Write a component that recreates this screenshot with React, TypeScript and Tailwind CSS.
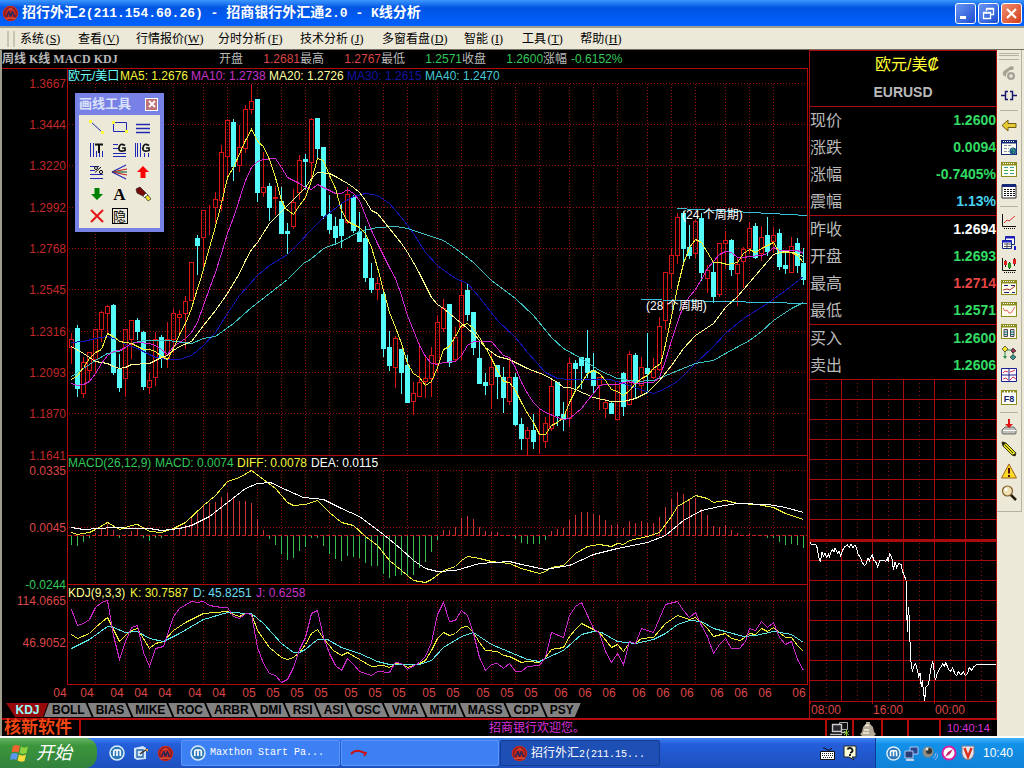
import React from "react";

type Candle = [kind: "u" | "d", high: number, top: number, bottom: number, low: number];

const candles: Candle[] = [
  ["u", 333, 339, 347, 363], ["d", 325, 328, 388, 396], ["u", 357, 362, 393, 397], ["u", 352, 352, 370, 380],
  ["u", 329, 329, 359, 372], ["u", 311, 312, 329, 341], ["u", 305, 306, 313, 333], ["d", 304, 305, 372, 374],
  ["d", 354, 369, 387, 391], ["u", 329, 329, 378, 396], ["u", 320, 320, 339, 358], ["d", 318, 320, 331, 339],
  ["d", 331, 332, 386, 389], ["u", 373, 380, 387, 393], ["u", 332, 339, 377, 385], ["d", 335, 337, 357, 367],
  ["u", 322, 339, 358, 367], ["u", 308, 313, 339, 352], ["u", 310, 314, 317, 335], ["u", 296, 301, 313, 348],
  ["u", 262, 262, 300, 300], ["d", 235, 238, 245, 274], ["u", 210, 210, 237, 267], ["u", 205, 212, 212, 234],
  ["u", 192, 199, 207, 222], ["u", 145, 152, 200, 210], ["u", 119, 120, 156, 175], ["d", 119, 122, 166, 180],
  ["u", 125, 147, 165, 171], ["u", 105, 109, 148, 152], ["u", 84, 101, 109, 113], ["d", 99, 99, 192, 201],
  ["u", 152, 187, 192, 196], ["d", 183, 186, 207, 220], ["u", 186, 197, 198, 214], ["d", 187, 201, 233, 233],
  ["d", 223, 231, 233, 253], ["u", 189, 202, 226, 228], ["u", 155, 160, 192, 199], ["d", 154, 159, 161, 189],
  ["u", 118, 119, 162, 179], ["d", 118, 118, 148, 158], ["d", 147, 147, 215, 218], ["d", 195, 214, 229, 233],
  ["d", 217, 226, 237, 244], ["d", 204, 219, 235, 247], ["u", 187, 194, 222, 223], ["d", 195, 197, 230, 232],
  ["d", 212, 232, 241, 241], ["d", 226, 238, 277, 281], ["d", 263, 278, 289, 292], ["u", 277, 283, 289, 299],
  ["d", 292, 294, 348, 356], ["d", 331, 347, 365, 370], ["u", 336, 338, 367, 387], ["d", 349, 349, 372, 393],
  ["d", 355, 365, 402, 402], ["u", 382, 393, 401, 414], ["u", 343, 382, 396, 396], ["u", 355, 378, 381, 397],
  ["u", 347, 355, 378, 396], ["u", 315, 322, 363, 372], ["u", 299, 308, 328, 331], ["d", 304, 304, 362, 366],
  ["u", 327, 337, 359, 360], ["u", 280, 295, 327, 359], ["d", 283, 290, 314, 320], ["d", 312, 312, 347, 354],
  ["d", 342, 358, 383, 383], ["d", 373, 382, 385, 394], ["u", 352, 367, 384, 408], ["d", 365, 365, 376, 398],
  ["d", 367, 377, 397, 412], ["u", 357, 377, 401, 404], ["d", 373, 377, 424, 425], ["d", 418, 424, 438, 449],
  ["u", 427, 430, 438, 455], ["d", 414, 430, 441, 448], ["u", 408, 442, 442, 453], ["u", 417, 423, 441, 447],
  ["u", 378, 386, 428, 430], ["d", 382, 382, 415, 425], ["d", 402, 414, 419, 430], ["u", 358, 363, 418, 426],
  ["d", 360, 363, 368, 390], ["d", 357, 357, 365, 388], ["d", 330, 358, 372, 377], ["d", 353, 370, 385, 393],
  ["u", 377, 377, 385, 409], ["u", 399, 402, 408, 417], ["d", 401, 403, 413, 413], ["u", 381, 381, 419, 419],
  ["d", 372, 373, 406, 415], ["u", 351, 354, 404, 404], ["d", 353, 355, 383, 398], ["u", 357, 367, 385, 393],
  ["d", 333, 368, 373, 392], ["u", 358, 369, 377, 378], ["u", 317, 326, 369, 370], ["u", 272, 272, 320, 329],
  ["u", 248, 255, 273, 288], ["u", 213, 217, 255, 263], ["d", 211, 213, 248, 264], ["d", 225, 247, 255, 258],
  ["u", 220, 221, 253, 257], ["d", 213, 218, 272, 280], ["u", 265, 270, 278, 292], ["d", 262, 272, 296, 302],
  ["u", 243, 243, 294, 296], ["u", 231, 240, 243, 268], ["d", 239, 240, 269, 275], ["u", 257, 264, 273, 305],
  ["u", 247, 249, 261, 287], ["u", 222, 228, 248, 253], ["d", 223, 226, 257, 258], ["u", 226, 237, 253, 260],
  ["d", 217, 235, 251, 255], ["u", 227, 235, 241, 252], ["d", 229, 233, 266, 269], ["d", 253, 265, 268, 273],
  ["u", 237, 246, 272, 272], ["d", 238, 243, 265, 272], ["d", 248, 263, 279, 284],
];

const macdBars = [
  -9, -10, -6, -2, 2, 6, 11, 5, -2, 0, 4, 6, -2, -5, -2, -2, 0, 5, 7, 10, 17, 22, 29, 32, 33, 38, 42, 37, 34, 34, 32,
  16, 5, -3, -9, -18, -24, -22, -15, -11, -2, -2, -10, -18, -23, -25, -20, -21, -22, -27, -30, -30, -38, -42, -40,
  -39, -40, -39, -32, -26, -16, -4, 5, 5, 8, 17, 19, 16, 8, 4, 3, 3, 0, 0, -3, -7, -8, -8, -8, -4, 4, 6, 7, 15, 20,
  23, 23, 21, 20, 15, 10, 11, 7, 14, 12, 14, 12, 12, 18, 28, 36, 43, 41, 36, 37, 26, 20, 9, 8, 10, 5, 2, 0, 2, 0, 0,
  -2, -2, -6, -9, -8, -9, -12,
];

const priceLines: { color: string; points: string }[] = [
  {
    color: "#1414b4",
    points:
      "71,342 83,341 95,338 107,336 119,340 125,344 137,348 155,357 167,359 179,359 191,355 203,345 215,332 227,313 239,295 257,275 269,265 287,254 299,242 310,230 323,217 341,203 353,196 365,193 377,195 389,203 401,217 413,233 425,252 437,265 455,278 467,283 479,297 497,320 515,337 527,352 545,372 557,378 570,379 610,379 623,383 640,389 653,393 663,389 677,381 695,363 713,346 725,333 743,318 767,303 785,290 803,276",
  },
  {
    color: "#3cc0c0",
    points:
      "71,376 83,368 95,360 107,353 119,351 131,343 143,340 167,340 191,343 203,338 215,336 233,323 251,307 269,293 287,279 303,263 310,259 323,248 341,241 359,231 377,227 395,226 407,228 425,234 443,240 455,248 473,262 491,280 515,298 533,315 551,337 563,348 581,358 599,370 617,378 635,381 653,380 663,376 695,363 713,360 725,353 749,340 761,331 773,320 791,308 803,302",
  },
  {
    color: "#ffff90",
    points:
      "71,346 83,353 95,361 107,363 113,366 119,368 125,367 131,364 149,363 161,357 167,355 173,350 179,346 191,341 197,333 203,325 215,310 227,293 239,273 245,260 251,249 257,242 269,223 281,211 293,199 305,187 311,178 317,172 329,173 335,176 347,183 353,187 359,192 365,200 371,210 377,213 389,228 401,243 407,252 413,262 419,273 425,285 431,297 437,304 443,308 455,318 461,323 473,333 485,347 497,356 509,359 527,368 545,375 557,382 563,387 569,387 575,389 593,397 611,401 623,401 635,398 647,392 659,380 671,365 683,348 695,335 713,323 725,307 737,296 755,275 767,261 773,254 783,251 793,252 803,256",
  },
  {
    color: "#d228d2",
    points:
      "71,383 77,385 83,384 89,381 95,373 101,363 107,355 113,351 119,350 125,347 131,343 137,342 149,343 155,345 161,349 167,354 173,346 179,342 185,338 191,332 197,322 203,305 209,288 215,272 221,253 227,233 233,217 245,180 251,167 257,161 263,159 275,158 281,167 287,177 293,180 299,183 305,187 311,189 317,184 323,187 335,193 341,193 347,189 353,193 359,200 365,215 371,230 377,243 383,255 389,267 395,278 401,295 407,315 413,330 419,345 425,356 431,363 437,364 443,362 455,361 461,355 467,345 473,341 491,341 497,348 503,355 509,357 515,367 521,382 527,393 533,402 539,408 545,412 557,417 563,419 569,418 575,413 581,408 587,400 593,393 599,385 605,384 617,384 627,381 635,383 653,382 659,377 665,360 671,340 677,322 683,305 689,296 695,289 701,279 707,268 713,261 719,254 725,251 731,252 737,257 743,257 749,256 761,255 767,253 773,247 779,250 797,250 803,253",
  },
  {
    color: "#f0f03c",
    points:
      "71,379 77,375 83,367 89,358 95,352 101,349 107,333 113,336 119,341 125,342 131,343 137,346 143,349 149,349 155,351 161,356 167,359 173,348 179,334 185,323 191,308 197,288 200,279 213,233 221,203 227,177 233,167 245,140 251,129 258,142 263,146 269,159 275,177 281,200 285,208 293,214 299,205 305,197 311,180 317,158 323,160 329,175 335,188 341,210 347,221 359,227 365,233 371,247 377,267 383,290 389,312 395,327 401,343 407,363 413,373 419,377 425,385 431,381 437,367 443,349 449,346 455,336 461,325 467,323 473,328 479,337 485,347 491,358 497,370 503,381 509,382 515,390 521,402 527,413 533,422 539,434 545,434 551,425 557,422 563,417 569,402 575,390 581,383 587,373 593,370 599,373 605,380 611,389 617,391 623,395 629,390 635,383 641,378 647,375 653,368 660,363 663,353 668,330 673,307 677,287 683,263 689,247 695,239 701,242 707,252 713,262 719,262 727,264 737,262 743,253 749,249 755,252 761,248 767,245 773,242 779,252 791,252 797,255 803,262",
  },
  { color: "#3cc0d8", points: "677,208 807,215" },
  { color: "#3cc0d8", points: "641,299 807,303" },
];

const indicatorLines: { color: string; points: string }[] = [
  {
    color: "#f0f03c",
    points:
      "71,532 77,534 89,532 95,529 107,522 119,529 131,525 137,524 149,531 161,532 173,528 185,522 203,505 215,495 227,481 239,477 251,470 263,479 275,488 287,502 293,505 305,504 317,500 329,512 341,522 353,525 365,536 377,545 389,560 401,570 413,580 425,582 431,579 443,570 455,566 461,560 467,556 479,558 491,561 509,563 521,568 539,573 545,571 551,567 563,565 575,553 587,546 599,544 611,546 617,543 623,544 629,540 647,536 659,532 671,516 677,506 689,499 695,495 707,498 713,502 725,500 737,503 757,504 773,507 785,513 803,519",
  },
  {
    color: "#ffffff",
    points:
      "71,527 83,529 113,527 133,528 149,528 161,530 179,528 191,525 209,516 227,502 245,488 257,483 270,482 287,490 303,497 323,499 341,508 359,516 383,534 400,548 413,560 425,568 437,571 455,570 479,563 509,561 521,564 545,569 569,565 593,554 617,548 647,542 665,535 683,520 701,510 719,506 737,503 767,504 785,507 803,512",
  },
  {
    color: "#f0f03c",
    points:
      "71,634 77,638 89,633 95,627 107,617 119,641 125,635 131,630 137,628 149,648 155,643 163,641 173,630 185,622 203,613 227,611 233,614 239,616 245,613 251,613 257,630 269,647 281,657 287,659 293,657 299,652 305,644 311,633 317,629 323,638 333,650 341,655 347,652 359,659 371,666 383,665 389,667 395,663 401,663 407,667 419,663 425,660 431,650 437,638 443,632 449,635 455,633 461,627 467,626 473,632 479,642 485,650 497,651 503,655 509,656 521,662 527,661 539,662 545,657 551,649 563,647 569,636 575,629 581,623 587,626 599,632 611,647 617,644 623,651 629,642 635,643 641,638 653,637 665,623 677,615 689,619 695,617 701,622 707,628 713,636 725,633 731,638 740,640 749,633 755,634 761,628 767,631 773,627 779,632 785,637 791,637 797,645 803,651",
  },
  {
    color: "#5ae6e6",
    points:
      "71,648 89,639 107,626 113,627 125,632 137,631 149,638 163,641 179,633 203,619 227,612 251,613 263,623 281,643 293,652 299,652 305,649 317,639 327,639 341,647 359,653 377,661 389,664 409,664 419,664 431,660 443,647 461,636 473,632 491,644 515,654 527,659 539,661 545,658 563,650 581,634 593,631 601,632 617,641 635,643 653,639 665,633 677,624 689,620 701,621 713,628 725,631 743,636 755,635 773,631 791,634 803,642",
  },
  {
    color: "#c828c8",
    points:
      "71,609 77,625 83,623 89,619 95,607 101,602 107,600 113,635 119,659 125,641 131,627 137,625 143,652 149,666 155,648 163,646 173,616 179,608 191,601 197,602 203,601 209,605 221,607 227,607 233,616 239,618 245,613 251,614 257,647 263,663 269,673 275,675 281,682 287,679 293,667 299,649 305,637 311,613 317,610 323,637 329,653 335,665 341,670 347,658 353,664 359,671 371,675 377,671 389,672 395,662 401,663 407,669 419,662 425,656 431,642 437,614 443,602 449,621 455,620 461,610 467,615 473,633 479,657 485,670 491,664 497,663 503,668 509,663 515,671 521,671 527,666 539,665 545,657 551,632 563,637 569,615 575,606 581,602 587,615 593,628 599,633 605,651 611,662 617,653 623,664 629,641 635,643 641,628 653,632 665,604 677,601 683,610 689,617 695,612 701,625 707,636 713,653 719,644 725,638 731,648 739,648 745,641 749,628 755,630 761,621 767,627 773,622 779,637 785,644 791,641 797,659 803,670",
  },
];

const gridColumns = [
  95, 125, 149, 173, 203, 227, 257, 281, 305, 329, 359, 383, 407, 437, 461, 491, 515, 539, 569, 593, 617, 647, 671,
  695, 725, 749, 773,
];
const gridRows = [83, 124, 165, 207, 248, 289, 331, 372, 413, 470, 527, 600, 642];
const priceLabels: [string, number][] = [
  ["1.3667", 83], ["1.3444", 124], ["1.3220", 165], ["1.2992", 207], ["1.2768", 248],
  ["1.2545", 289], ["1.2316", 331], ["1.2093", 372], ["1.1870", 413], ["1.1641", 455],
];
const monthLabels = [60, ...gridColumns.map((x) => x - 8), 799];

const SANS = '"Liberation Sans","Noto Sans CJK SC",sans-serif';

function PriceChart() {
  return (
    <svg viewBox="2 68 807 634" className="block h-auto w-full" fontFamily={SANS} fontSize="12">
      <g shapeRendering="crispEdges" fill="none">
        <g stroke="#960e0e" strokeDasharray="1 2">
          {gridColumns.map((x) => (
            <React.Fragment key={x}>
              <path d={`M${x + 0.5} 84V455`} />
              <path d={`M${x + 0.5} 471V584`} />
              <path d={`M${x + 0.5} 601V684`} />
            </React.Fragment>
          ))}
          {gridRows.map((y) => (
            <path key={y} d={`M69 ${y + 0.5}H807`} />
          ))}
        </g>
        <path d="M2 68.5H807.5V684.5H67.5V68.5M67 455.5H807M67 584.5H807" stroke="#b40a0a" />
        <path d="M68 535.5H807" stroke="#c81e1e" strokeDasharray="4 2" />
        {macdBars.map((v, i) =>
          v === 0 ? null : (
            <rect
              key={i}
              x={71 + i * 6}
              y={v > 0 ? 535 - v : 536}
              width="1"
              height={Math.abs(v)}
              fill={v > 0 ? "#d23232" : "#32be50"}
            />
          ),
        )}
        {candles.map(([kind, high, top, bottom, low], i) => {
          const x = 71 + i * 6;
          return kind === "d" ? (
            <g key={i} fill="#54fcfc">
              <rect x={x} y={high} width="1" height={low - high + 1} />
              <rect x={x - 2} y={top} width="5" height={bottom - top + 1} />
            </g>
          ) : (
            <g key={i}>
              <path
                d={`M${x} ${high}h1V${top}h-1zM${x} ${bottom}h1V${low + 1}h-1z`}
                fill="#d81414"
              />
              <rect x={x - 1.5} y={top + 0.5} width="4" height={bottom - top} stroke="#d81414" />
            </g>
          );
        })}
        {[...priceLines, ...indicatorLines].map((line, i) => (
          <polyline key={i} points={line.points} stroke={line.color} transform="translate(0.5 0.5)" />
        ))}
      </g>

      <g fill="#c02828" textAnchor="end">
        {priceLabels.map(([label, y]) => (
          <text key={label} x="66" y={y + 5}>{label}</text>
        ))}
        <g fill="#dc4646">
          <text x="66" y="475">0.0335</text>
          <text x="66" y="532">0.0045</text>
          <text x="66" y="589" fill="#32c85a">-0.0244</text>
          <text x="66" y="605">114.0665</text>
          <text x="66" y="647">46.9052</text>
        </g>
      </g>
      <g fill="#dc4646" textAnchor="middle">
        {monthLabels.map((x, i) => (
          <text key={x} x={x} y="697">{i < 7 ? "04" : i < 19 ? "05" : "06"}</text>
        ))}
      </g>
      <text x="68" y="80" fill="#6effff">欧元/美口</text>
      <text x="120" y="80" fill="#f5f53c">MA5: 1.2676</text>
      <text x="191" y="80" fill="#c832c8">MA10: 1.2738</text>
      <text x="269" y="80" fill="#ffffa0">MA20: 1.2726</text>
      <text x="347" y="80" fill="#1414a0">MA30: 1.2615</text>
      <text x="425" y="80" fill="#46c8d2">MA40: 1.2470</text>

      <text x="68" y="467" fill="#32c85a">MACD(26,12,9)</text>
      <text x="155" y="467" fill="#32c85a">MACD: 0.0074</text>
      <text x="237" y="467" fill="#f5f53c">DIFF: 0.0078</text>
      <text x="311" y="467" fill="#ffffff">DEA: 0.0115</text>

      <text x="68" y="597" fill="#ffff90">KDJ(9,3,3)</text>
      <text x="130" y="597" fill="#f5f53c">K: 30.7587</text>
      <text x="193" y="597" fill="#6edcf0">D: 45.8251</text>
      <text x="256" y="597" fill="#c832c8">J: 0.6258</text>

      <text x="682" y="219" fill="#ffffff">(24 个周期)</text>
      <text x="646" y="310" fill="#ffffff">(28 个周期)</text>
    </svg>
  );
}

/* Intraday ticks, in thirds of a pixel from the chart origin. */
const ticks: [number, number][] = [
  [30, 487], [34, 493], [48, 495], [52, 505], [56, 530], [61, 547], [66, 515], [70, 530], [75, 520], [80, 532],
  [85, 522], [88, 530], [93, 517], [98, 508], [102, 515], [105, 505], [109, 512], [113, 520], [117, 512],
  [122, 528], [128, 510], [134, 500], [142, 495], [148, 503], [153, 492], [159, 503], [165, 495], [170, 505],
  [175, 525], [180, 530], [186, 545], [192, 556], [198, 553], [204, 535], [208, 543], [213, 530], [217, 525],
  [221, 540], [227, 545], [233, 560], [240, 540], [250, 540], [257, 545], [262, 535], [265, 545], [269, 518],
  [277, 540], [280, 570], [285, 545], [290, 562], [296, 550], [303, 553], [308, 575], [312, 585], [318, 600],
  [320, 680], [322, 757], [325, 682], [327, 705], [330, 785], [333, 845], [337, 875], [341, 860], [347, 850],
  [352, 870], [356, 890], [360, 880], [364, 920], [367, 900], [370, 930], [374, 962], [378, 920], [385, 915],
  [392, 870], [398, 842], [402, 870], [406, 900], [412, 880], [420, 865], [428, 852], [433, 858], [438, 848],
  [445, 868], [452, 873], [458, 863], [464, 880], [470, 887], [475, 875], [483, 885], [490, 875], [496, 887],
  [503, 880], [508, 862], [514, 872], [522, 860], [530, 853], [588, 853],
];

function IntradayChart() {
  const rows = [399, 419, 439, 459, 479, 499, 519, 560, 580, 600, 620, 640, 660, 680, 701];
  return (
    <svg viewBox="809 379 188 339" className="block h-auto w-full" fontFamily={SANS} fontSize="12">
      <g shapeRendering="crispEdges" fill="none" stroke="#aa0a0a">
        {rows.map((y) => (
          <path key={y} d={`M809 ${y + 0.5}H997`} />
        ))}
        {[841, 872, 903, 934, 965, 996].map((x) => (
          <path key={x} d={`M${x + 0.5} 379V701`} />
        ))}
        {[826, 857, 888, 919, 950, 981].map((x) => (
          <path key={x} d={`M${x + 0.5} 379V701`} strokeDasharray="1 3" stroke="#961414" />
        ))}
        <path d="M809 379.5H997" />
        <path d="M809 540.5H997" strokeWidth="3" />
        <path d="M810.5 701V704M872.5 701V704M934.5 701V704" />
        <polyline
          points={ticks.map(([x, y]) => `${800 + x / 3},${380 + y / 3}`).join(" ")}
          stroke="#ffffff"
        />
      </g>
      <g fill="#dc4646">
        <text x="811" y="714">08:00</text>
        <text x="873" y="714">16:00</text>
        <text x="935" y="714">00:00</text>
      </g>
    </svg>
  );
}

function BankLogo({ className }: { className: string }) {
  return (
    <svg viewBox="0 0 18 18" className={className}>
      <circle cx="9" cy="9" r="8.2" fill="#c8281e" />
      <circle cx="9" cy="9" r="6.2" fill="none" stroke="#5a1420" strokeWidth="1" />
      <path d="M4 12.5 6.8 6h.8L9 9.5 10.6 6h.8l2.8 6.5h-2L11 9l-1.2 3.5H8.2L7 9l-1.2 3.5z" fill="#28285a" />
      <path d="M3.5 14h11M6.8 5.5 9 3l2.4 2.5" stroke="#f06440" strokeWidth="1" fill="none" />
    </svg>
  );
}

function MaxthonLogo({ className }: { className: string }) {
  return (
    <svg viewBox="0 0 16 16" className={className}>
      <circle cx="8" cy="8" r="7" fill="#2c78b8" stroke="#dceefa" strokeWidth="1.5" />
      <path d="M4.8 11V6.5Q4.8 5 6.4 5H9.8Q11.3 5 11.3 6.5V11M8 5.5V11" stroke="#fff" strokeWidth="1.7" fill="none" />
    </svg>
  );
}

const quoteGroups: [string, string, string][][] = [
  [
    ["现价", "1.2600", "text-[#32dc64]"],
    ["涨跌", "0.0094", "text-[#32dc64]"],
    ["涨幅", "-0.7405%", "text-[#32dc64]"],
    ["震幅", "1.13%", "text-[#46d2f0]"],
  ],
  [
    ["昨收", "1.2694", "text-white"],
    ["开盘", "1.2693", "text-[#32dc64]"],
    ["最高", "1.2714", "text-[#e64646]"],
    ["最低", "1.2571", "text-[#32dc64]"],
  ],
  [
    ["买入", "1.2600", "text-[#32dc64]"],
    ["卖出", "1.2606", "text-[#32dc64]"],
  ],
];

function QuotePanel() {
  return (
    <aside className="flex w-[188px] shrink-0 flex-col border-x border-t border-[#aa0a0a]">
      <div className="flex h-[55px] flex-col items-center pt-[3px]">
        <h2 className="pl-2 text-base leading-[22px] text-[#ffff32]">欧元/美₡</h2>
        <p className="pt-1 text-sm leading-6 font-bold text-[#b9b9b9]">EURUSD</p>
      </div>
      <table className="w-full border-collapse">
        {quoteGroups.map((group, i) => (
          <tbody key={i} className="border-t border-[#aa0a0a]">
            {group.map(([label, value, tone]) => (
              <tr key={label} className="h-[27px]">
                <th scope="row" className="p-0 text-left text-base leading-[27px] font-normal text-[#b9b9b9]">{label}</th>
                <td className={`p-0 text-right text-sm leading-[27px] font-bold ${tone}`}>{value}</td>
              </tr>
            ))}
          </tbody>
        ))}
      </table>
      <div className="-mx-px">
        <IntradayChart />
      </div>
    </aside>
  );
}

const drawTools: [string, React.ReactNode][] = [
  ["线段", <><path d="M3 3 14 13" stroke="#1e28b4" /><path d="M1 1h3v3H1zM13 12h3v3h-3z" fill="#fafa3c" /></>],
  ["矩形", <><path d="M2.5 3.5h13v9h-13z" stroke="#1e28b4" fill="none" /><path d="M1 2h3v3H1zM14 11h3v3h-3z" fill="#fafa3c" /></>],
  ["平行线", <path d="M2 5.5h14M2 9.5h14M2 13.5h14" stroke="#1e28b4" strokeWidth="1.4" />],
  ["周期线", <><path d="M2.5 2v14M5.5 2v14M8.5 10v6M11.5 12v4M14.5 10v6" stroke="#1e28b4" /><path d="M7 3.5h8M11 3v9" stroke="#111" strokeWidth="2" /></>],
  ["黄金分割", <><path d="M2 3.5h5M2 7.5h5M2 12.5h13M2 15.5h13" stroke="#1e28b4" /><path d="M14 4.5q-5-3-6 2t6 3V7h-3" stroke="#111" strokeWidth="1.7" fill="none" /></>],
  ["黄金周期", <><path d="M1.5 2v14M3.5 2v14M6.5 2v14M10.5 12v4M14.5 12v4" stroke="#1e28b4" /><path d="M15 4.5q-5-3-6 2t6 3V7h-3" stroke="#111" strokeWidth="1.7" fill="none" /></>],
  ["百分比线", <><path d="M2 3.5h9M2 7.5h5M2 11.5h13M2 15.5h13" stroke="#1e28b4" /><path d="M7 9.5 13 4" stroke="#111" /><circle cx="8" cy="5" r="1.5" stroke="#111" fill="none" /><circle cx="13" cy="9" r="1.6" stroke="#111" fill="none" /></>],
  ["扇形线", <g fill="none" strokeWidth="1.2"><path d="M1 9 15 2" stroke="#1e28b4" /><path d="M1 9 16 6" stroke="#c81e1e" /><path d="M1 9h15" stroke="#146e46" /><path d="M1 9 16 12" stroke="#c81e1e" /><path d="M1 9 15 16" stroke="#1e28b4" /></g>],
  ["上箭头", <path d="M9 3 15 9h-3.5v6h-5V9H3z" fill="#ff0000" />],
  ["下箭头", <path d="M9 15 15 9h-3.5V3h-5v6H3z" fill="#008000" />],
  ["文字", null],
  ["橡皮", <><path d="M2 4 6 2 12 8 9 11 3 8z" fill="#780a0a" stroke="#111" strokeWidth=".6" /><path d="M9 11 12 8 14 10 11 13z" fill="#fff" stroke="#111" strokeWidth=".6" /><path d="M11 12 14 10 17 14 14 16z" fill="#f5e632" stroke="#111" strokeWidth=".6" /></>],
  ["删除", <path d="M3 3 15 15M15 3 3 15" stroke="#e61414" strokeWidth="2" />],
];

function DrawToolWindow() {
  return (
    <section className="absolute top-[25px] left-[73px] w-[89px] border-4 border-t-0 border-[#7882e6] bg-[#ece9d8]">
      <header className="flex h-[22px] items-center justify-between bg-[#7882e6] pr-0.5">
        <h3 className="text-[13px] leading-5 font-bold whitespace-nowrap text-[#dce1fa]">画线工具</h3>
        <button aria-label="关闭" className="flex size-[13px] items-center justify-center border border-white bg-[#be7378]">
          <svg viewBox="0 0 8 8" className="size-2"><path d="M1 1 7 7M7 1 1 7" stroke="#fff" strokeWidth="1.8" /></svg>
        </button>
      </header>
      <div className="grid grid-cols-3 justify-items-center px-1.5 pt-0.5 pb-px">
        {drawTools.map(([label, art]) => (
          <button key={label} aria-label={label} className="flex size-[22px] items-center justify-center">
            {art ? (
              <svg viewBox="0 0 18 18" className="size-[18px]">{art}</svg>
            ) : (
              <span className="font-['Liberation_Serif'] text-[17px] leading-none font-bold text-black">A</span>
            )}
          </button>
        ))}
        <button className="flex size-[22px] items-center justify-center">
          <span className="flex size-4 items-center justify-center border border-black text-[13px] leading-none text-black">隐</span>
        </button>
      </div>
    </section>
  );
}

const sheet = (ink: string, body: React.ReactNode) => (
  <>
    <rect x=".5" y="1.5" width="15" height="14" fill="#fffff0" stroke={ink} />
    <path d="M1 3h14" stroke={ink} strokeWidth="3" />
    <path d="M2 2.5h12" stroke="#fff" strokeDasharray="1 1" />
    {body}
  </>
);
const OLIVE = "#8c8c1e";
const NAVY = "#142878";

const toolIcons: ([string, React.ReactNode] | null)[] = [
  ["电话", <><path d="M2 10Q1 7 4 5L10 1l3 1-1 3-3 0-4 4v3z" fill="#a5a396" /><circle cx="10" cy="11" r="4" fill="#a5a396" /><circle cx="10" cy="11" r="1.7" fill="#ece9d8" /></>],
  ["连接", <path d="M0 8.500h4M12 8.500h4M7 4.500H4.500V12.500H7M9 4.500h2.500V12.500H9" stroke="#14146e" strokeWidth="1.400" fill="none" />],
  null,
  ["返回", <path d="M1 8.500 7 3v3.500h8v4H7V14z" fill="#e6c832" stroke="#64500a" strokeWidth=".9" />],
  ["行情", sheet(NAVY, <><path d="M3 6.500h7M3 9.500h5M3 12.500h5" stroke="#8291b4" strokeDasharray="3 1" /><circle cx="12" cy="12" r="3.500" fill="#1e5a8c" /><path d="M10 11q2-2 3 0t-1 3" stroke="#3cb464" fill="none" /></>)],
  ["报价", sheet(OLIVE, <><path d="M3 6.500h4M9 6.500h4M3 12.500h4M9 12.500h4" stroke="#32a0a0" /><path d="M3 9.500h4M9 9.500h4" stroke="#46aa46" /></>)],
  ["列表", <><path d="M1 2h14v13H1z" fill="#fff" stroke="#282828" /><path d="M1 2.500h14" stroke={NAVY} strokeWidth="3" /><path d="M3 6.500h11M3 8.500h11M3 10.500h11M3 12.500h11" stroke="#111" strokeDasharray="2 1" /></>],
  null,
  ["走势", <><path d="M1.500 1v12.500H15" stroke="#111" fill="none" /><path d="M3 10 6 7 8 8 14 3" stroke="#dc3232" fill="none" /><path d="M3 15.500h12" stroke="#111" strokeDasharray="1 1" /></>],
  ["多窗", <><path d="M4.500 1.500h9v8h-9z" fill="#fff" stroke={NAVY} /><path d="M1.500 5.500h9v8h-9z" fill="#fff" stroke={NAVY} /><path d="M4 2.500h10M1 6.500h10" stroke="#1e1ec8" strokeWidth="2" /><path d="M3 9h7M3 11.500h7M6 8v5" stroke="#555" /><path d="M14 11v4" stroke="#1e1ec8" strokeWidth="2" /></>],
  ["K线", <><path d="M1.500 1v12.500H15" stroke="#111" fill="none" /><path d="M3 15.500h12" stroke="#111" strokeDasharray="1 1" /><path d="M4.500 3v7M8.500 5v7M13.500 1v8" stroke="#111" /><path d="M3 4h3v4H3zM12 2h3v5h-3z" fill="#dc1e1e" /><path d="M7 6h3v5H7z" fill="#1e961e" /></>],
  ["分析", sheet(OLIVE, <><path d="M2 11 6 10 9 11 14 7" stroke="#b42828" fill="none" /><path d="M3 6.500h4M10 6.500h4M3 13.500h5M11 13.500h3" stroke="#1e1e78" /></>)],
  ["曲线", sheet(OLIVE, <path d="M2 7 4 10 6 9 8 12 10 12 12 9 14 6" stroke="#e66464" fill="none" />)],
  ["对照", sheet(OLIVE, <><path d="M3 6.500h3.500v7H3zM9.500 6.500H13v7H9.500z" fill="#c8dcf0" stroke="#5a3c50" /><path d="M3 9h4M3 11.500h4M9 9h4M9 11.500h4" stroke="#146e5a" /></>)],
  ["流程", <><path d="M4 5v8M4 5h8M12 5v7" stroke="#288c46" fill="none" /><path d="M4 1 7 4 4 7 1 4z" fill="#f0e632" stroke="#111" strokeWidth=".6" /><path d="M12 3 15 6 12 8 10 6z" fill="#a0325a" stroke="#111" strokeWidth=".6" /><path d="M12 10 15 12 12 15 9 12z" fill="#329696" stroke="#111" strokeWidth=".6" /><path d="M2 11h4l-2 3z" fill="#288c46" /></>],
  ["四分图", <><path d="M.500 1.500h15v13H.500zM8 1v14M1 8h15" fill="#fff" stroke="#1e1e8c" /><path d="M2 6 4 4 7 5M9 5 12 4 14 3M2 12 5 11 7 13M9 13 12 10 15 12" stroke="#dc3250" fill="none" /></>],
  ["F8", <><rect x=".5" y="1.500" width="15" height="14" fill="#fff" stroke={OLIVE} /><path d="M1 2.500h14" stroke={OLIVE} strokeWidth="2" strokeDasharray="2 1" /><text x="8" y="13" textAnchor="middle" fontSize="9" fontWeight="bold" fill="#14286e" fontFamily={SANS}>F8</text></>],
  null,
  ["下载", <><path d="M1 11 4 8h9l2 3v3q0 1-1 1H2q-1 0-1-1z" fill="#bebeb9" stroke="#505050" strokeWidth=".8" /><path d="M2 11.500h13" stroke="#fff" /><path d="M7 0h2v5h3L8 9 4 5h3z" fill="#dc1414" /></>],
  ["画笔", <><path d="M1 1 5 2 15 12 14 15 11 14 2 5z" fill="#e6dc28" stroke="#282800" strokeWidth=".9" /><path d="M1 1 5 2 2 5zM11 14l3 1 1-3z" fill="#281e14" /><path d="M4 4 12 12" stroke="#3c3c00" /></>],
  ["警告", <><path d="M8 1 15.500 15H.500z" fill="#fadc28" stroke="#965014" strokeWidth=".9" /><path d="M8 5v5.500M8 12v2" stroke="#500a0a" strokeWidth="2" /></>],
  ["查找", <><path d="M9 9 15 15" stroke="#281e0a" strokeWidth="2.500" /><circle cx="6.500" cy="6" r="5" fill="#f0e1b4" stroke="#7d5a28" strokeWidth="1.200" /><circle cx="5" cy="4.500" r="1.600" fill="#fff" /></>],
];

function SideToolbar() {
  return (
    <nav aria-label="工具栏" className="w-[27px] shrink-0 bg-[#ece9d8]">
      <div className="mr-0.5 flex flex-col items-center border-r border-b border-[#b4b2a0] pb-[7px]">
        <div className="mt-[3px] mb-[3px] h-[3px] w-5 border-y border-[#b4b2a0]" />
        <div className="mb-0.5 h-px w-5 bg-[#b4b2a0]" />
        {toolIcons.map((tool, i) =>
          tool ? (
            <button key={i} aria-label={tool[0]} className="flex size-[22px] items-center justify-center">
              <svg viewBox="0 0 16 16" className="size-4">{tool[1]}</svg>
            </button>
          ) : (
            <div key={i} className="mt-1 mb-[3px] h-px w-[18px] bg-[#b4b2a0]" />
          ),
        )}
      </div>
    </nav>
  );
}

const menus: [string, string][] = [
  ["系统", "S"], ["查看", "V"], ["行情报价", "W"], ["分时分析", "F"], ["技术分析", "J"],
  ["多窗看盘", "D"], ["智能", "I"], ["工具", "T"], ["帮助", "H"],
];

const tabs = ["BOLL", "BIAS", "MIKE", "ROC", "ARBR", "DMI", "RSI", "ASI", "OSC", "VMA", "MTM", "MASS", "CDP", "PSY"];

const summary: [string, string, string][] = [
  ["开盘", "1.2681", "text-[#dc4646]"],
  ["最高", "1.2767", "text-[#dc4646]"],
  ["最低", "1.2571", "text-[#32c85a]"],
  ["收盘", "1.2600", "text-[#32c85a]"],
];

function TitleBar() {
  return (
    <header className="flex h-[26px] items-center justify-between bg-linear-to-b from-[#3c96ff] via-[#0054e3] via-30% to-[#0062ff] pr-0.5 pl-0.5">
      <div className="flex items-center gap-[3px]">
        <BankLogo className="size-[17px]" />
        <h1 className="text-sm leading-[26px] font-bold whitespace-nowrap text-white">
          招行外汇<span className="font-['Liberation_Mono'] text-[13px] whitespace-pre">2(211.154.60.26) - </span>
          招商银行外汇通<span className="font-['Liberation_Mono'] text-[13px] whitespace-pre">2.0 - K</span>线分析
        </h1>
      </div>
      <div className="flex gap-0.5">
        <button aria-label="最小化" className="size-[21px] rounded-[3px] border border-white bg-linear-to-br from-[#6a94f4] to-[#1c4cd0]">
          <svg viewBox="0 0 19 19"><path d="M4 13.500h6" stroke="#fff" strokeWidth="3" /></svg>
        </button>
        <button aria-label="还原" className="size-[21px] rounded-[3px] border border-white bg-linear-to-br from-[#6a94f4] to-[#1c4cd0]">
          <svg viewBox="0 0 19 19" fill="none" stroke="#fff"><path d="M7.500 7V4.500h7v6H12M7 5h8" strokeWidth="1.300" /><path d="M4.500 8.500h7v6h-7zM4 9h8" strokeWidth="1.300" /></svg>
        </button>
        <button aria-label="关闭窗口" className="size-[21px] rounded-[3px] border border-white bg-linear-to-br from-[#f08c6e] to-[#d23c14]">
          <svg viewBox="0 0 19 19"><path d="M5 5 14 14M14 5 5 14" stroke="#fff" strokeWidth="2.200" /></svg>
        </button>
      </div>
    </header>
  );
}

function StatusBar() {
  return (
    <footer className="flex h-[18px] items-stretch border-t-2 border-[#b40a0a] text-xs leading-4">
      <strong className="w-[79px] shrink-0 border-r-2 border-[#b40a0a] pl-0.5 text-[17px] leading-4 whitespace-nowrap text-[#f04614]">核新软件</strong>
      <p className="flex-1 pl-[168px] text-center text-[#dc32dc]">招商银行欢迎您。</p>
      <div className="flex w-[27px] items-center justify-center border-l-2 border-[#b40a0a]">
        <svg viewBox="0 0 22 15" className="h-[15px] w-[22px]">
          <path d="M10.500 1.500h8v7h-8z" fill="#111" stroke="#aaa" /><path d="M3.500 3.500h9v7h-9z" fill="#282832" stroke="#ccc" strokeWidth="1.400" />
          <path d="M1 13.500h12M12 11.500h5" stroke="#bbb" strokeWidth="1.500" /><path d="M15 10l5 4M20 10l-5 4M17.500 9v6" stroke="#82c828" />
        </svg>
      </div>
      <div className="flex w-[29px] items-center justify-center border-l-2 border-[#b40a0a]">
        <svg viewBox="0 0 16 15" className="h-[15px] w-4">
          <path d="M6 1h4v2l3 3 1 5 2 2-2 2H2l-2-2 2-2 1-5 3-3z" fill="#b4aa96" /><path d="M5 5q2-2 4 0M4 9h5M3 12h6" stroke="#f5f0dc" strokeWidth="1.500" fill="none" />
        </svg>
      </div>
      <div className="w-[26px] border-l-2 border-[#b40a0a]" />
      <div className="w-8 border-l-2 border-[#b40a0a]" />
      <time className="w-[58px] border-l-2 border-[#b40a0a] pl-1.5 text-[11px] text-[#dc32dc]">10:40:14</time>
    </footer>
  );
}

function TaskBar() {
  return (
    <footer className="flex h-8 items-stretch border-t-2 border-white bg-linear-to-b from-[#3c82f0] via-[#245edb] via-20% to-[#1d50be] text-xs text-white">
      <button className="flex w-[97px] shrink-0 items-center gap-1.5 rounded-r-xl bg-linear-to-b from-[#64b464] via-[#3c963c] via-25% to-[#32823c] pl-[10px] text-lg leading-none italic">
        <svg viewBox="0 0 20 18" className="h-[18px] w-5">
          <path d="M3 2q3-2 7 0L8.500 8.500Q5 7 1.500 8.500z" fill="#f0642d" /><path d="M11 2.500q3.500 2 7 0L16.500 9Q13 11 9.500 9z" fill="#8cd23c" />
          <path d="M1 10q3.500-2 7 0L6.500 16Q3 14.500 0 16z" fill="#5a96f0" /><path d="M9 10.500q3.500 2 7 0L14.500 17Q11 18.500 7.500 16.500z" fill="#fadc3c" />
        </svg>
        开始
      </button>
      <div className="flex w-[84px] shrink-0 items-center gap-2 pl-3">
        <a href="#maxthon" aria-label="Maxthon"><MaxthonLogo className="size-4" /></a>
        <a href="#desktop" aria-label="桌面">
          <svg viewBox="0 0 16 16" className="size-4">
            <path d="M1 3 10 1 13 3v11L4 15 1 13z" fill="#d2e6fa" /><path d="M4 5h6v7H4z" fill="none" stroke="#2864aa" strokeWidth="1.400" /><path d="M7 9 14 4" stroke="#3c2814" strokeWidth="1.400" /><path d="M12 4h3v3z" fill="#f0a028" />
          </svg>
        </a>
        <a href="#forex" aria-label="外汇"><BankLogo className="size-[17px]" /></a>
      </div>
      <div className="flex min-w-0 flex-1 gap-px py-0.5">
        <button className="flex w-[159px] items-center gap-1 rounded-xs border border-[#5a96fa] bg-[#3c80f4] pl-2 font-['Liberation_Mono'] text-[10px]">
          <MaxthonLogo className="size-4" />Maxthon Start Pa...
        </button>
        <button aria-label="网页" className="flex w-[158px] items-center rounded-xs border border-[#5a96fa] bg-[#3c80f4] pl-2">
          <svg viewBox="0 0 17 8" className="h-2 w-[17px]"><path d="M1 5Q6-1 14 4M14 7 16 4 12 3" stroke="#c81414" strokeWidth="2" fill="none" /></svg>
        </button>
        <button className="flex w-40 items-center gap-[3px] rounded-xs border border-[#143c96] bg-[#1e4fb4] pl-2.5">
          <BankLogo className="size-[17px]" />
          <span>招行外汇<span className="font-['Liberation_Mono'] text-[10px]">2(211.15...</span></span>
        </button>
      </div>
      <div className="flex shrink-0 items-center gap-2 pr-[18px]">
        <svg viewBox="0 0 15 13" className="h-[13px] w-[15px]"><path d="M3 1h2l2 2h3l2-2" stroke="#111" fill="none" /><path d="M.500 4.500h14v8H.500z" fill="#fff" stroke="#111" /><path d="M2 6.500h11M2 8.500h11M3 10.500h9" stroke="#222" strokeDasharray="1 1" /></svg>
        <svg viewBox="0 0 14 16" className="h-4 w-3.5 shrink-0"><path d="M1 1h12v11H9l2 3-5-3H1z" fill="#ffffdc" stroke="#222" /><path d="M4.500 4.500Q5 3 7 3t2.500 2T7 8M7 9v2" stroke="#111" strokeWidth="1.800" fill="none" /></svg>
      </div>
      <div className="flex w-[149px] shrink-0 items-center gap-[3px] border-l border-[#0a3c96] bg-linear-to-b from-[#3cb4ff] via-[#1290e8] via-20% to-[#0f82d8] pl-2.5">
        <MaxthonLogo className="size-[15px]" />
        <svg viewBox="0 0 15 16" className="h-4 w-[15px]"><path d="M6 2h8v7H6z" fill="#28468c" stroke="#aac8f0" /><path d="M1 6h8v7H1z" fill="#283c78" stroke="#aac8f0" /><path d="M2 15h8" stroke="#c8d2e6" strokeWidth="2" /></svg>
        <svg viewBox="0 0 16 16" className="size-4"><circle cx="6" cy="7" r="5.500" fill="#8c8c82" /><circle cx="7" cy="6" r="3" fill="#323232" /><circle cx="5" cy="4" r="1.500" fill="#e6e6dc" /><path d="M11 13q3-2 3-5M13 15q3-3 3-6" stroke="#9bb9e6" fill="none" /></svg>
        <svg viewBox="0 0 16 16" className="size-4"><circle cx="8" cy="8" r="6.500" fill="#fff" stroke="#dc1ea0" strokeWidth="2" /><path d="M12 4 9 9 4 12 7 7z" fill="#c81e64" /></svg>
        <svg viewBox="0 0 16 16" className="size-4"><path d="M2 1h12v8q-1 5-6 6-5-1-6-6z" fill="#e6e6eb" stroke="#78788c" /><path d="M4.500 3 8 12 11.500 3" stroke="#dc321e" strokeWidth="2.400" fill="none" /></svg>
        <time className="pl-1 text-xs whitespace-nowrap">10:40</time>
      </div>
    </footer>
  );
}

export default function App() {
  return (
    <div className="min-h-screen bg-[#ece9d8] font-['Liberation_Sans','Noto_Sans_CJK_SC',sans-serif]">
      <TitleBar />
      <nav aria-label="菜单" className="flex h-6 items-center gap-4 border-t-2 border-b border-t-[#a09e8c] border-b-[#716f64] pl-[7px] text-xs text-black">
        <div className="-mr-[11px] h-4 w-2 border-x-2 border-[#c8c5b2]" />
        {menus.map(([label, key]) => (
          <button key={key} className="flex leading-5 whitespace-nowrap">
            {label}
            <span className="w-[18px] text-center font-['Liberation_Serif']">(<u>{key}</u>)</span>
          </button>
        ))}
      </nav>
      <div className="flex">
        <div className="min-w-0 flex-1 bg-black">
          <div className="flex border-l-2 border-[#a09e8c]">
            <main className="min-w-0 flex-1">
              <div className="flex h-[18px] items-center text-xs leading-[18px] whitespace-nowrap text-[#b9b9b9]">
                <h2 className="w-[217px] font-['Liberation_Serif','Noto_Sans_CJK_SC',serif] text-xs leading-[18px] font-bold">周线 K线 MACD KDJ</h2>
                {summary.map(([label, value, tone]) => (
                  <React.Fragment key={label}>
                    <span>{label}</span>
                    <span className={`w-[57px] text-right ${tone}`}>{value}</span>
                  </React.Fragment>
                ))}
                <span>涨幅</span>
                <span className="pl-1 text-[#32c85a]">-0.6152%</span>
              </div>
              <div className="relative">
                <PriceChart />
                <DrawToolWindow />
              </div>
              <div role="tablist" className="flex h-4 items-start pt-px pl-1 text-xs leading-[14px] font-bold text-black">
                <button role="tab" aria-selected="true" className="w-[42px] bg-[#960a0a] pl-px text-[#96ffff] [clip-path:polygon(0_0,100%_0,37px_100%,9px_100%)]">KDJ</button>
                {tabs.map((tab, i) => (
                  <button
                    key={tab}
                    role="tab"
                    aria-selected="false"
                    className={`-ml-1 bg-[#828282] pr-[7px] pl-2 ${
                      i === 0
                        ? "[clip-path:polygon(5px_0,calc(100%-6px)_0,100%_100%,0_100%)]"
                        : i === tabs.length - 1
                          ? "[clip-path:polygon(0_0,100%_0,calc(100%-6px)_100%,6px_100%)]"
                          : "[clip-path:polygon(0_0,calc(100%-6px)_0,100%_100%,6px_100%)]"
                    }`}
                  >
                    {tab}
                  </button>
                ))}
              </div>
            </main>
            <QuotePanel />
          </div>
          <div className="border-l-2 border-[#a09e8c]">
            <StatusBar />
          </div>
        </div>
        <SideToolbar />
      </div>
      <TaskBar />
    </div>
  );
}
